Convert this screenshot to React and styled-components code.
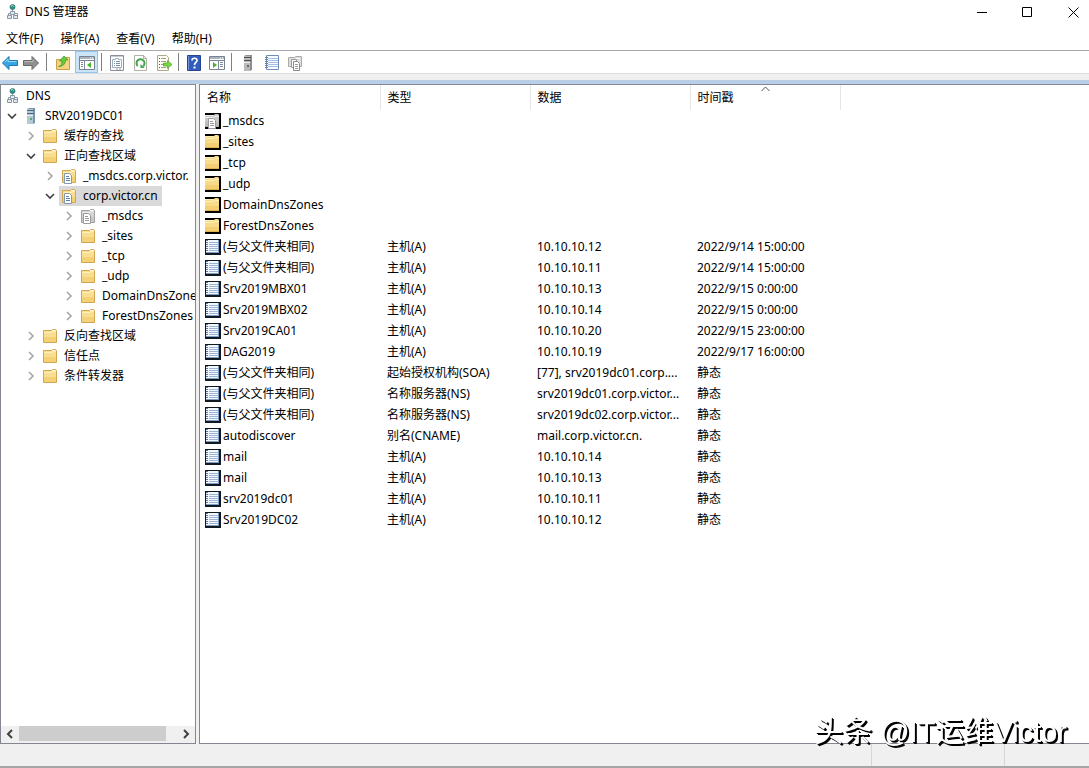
import React, { useState } from 'react';
import styled, { createGlobalStyle, css } from 'styled-components';

const GlobalStyle = createGlobalStyle`
  * {
    box-sizing: border-box;
  }

  body {
    margin: 0;
    background: #fff;
    color: #000;
    font-family: 'Noto Sans', 'Noto Sans CJK SC', sans-serif;
    font-size: 12px;
    line-height: 20px;
  }

  button {
    border: 0;
    padding: 0;
    background: none;
    color: inherit;
    font: inherit;
  }

  svg {
    display: block;
    flex: none;
  }
`;

const Window = styled.div`
  display: flex;
  flex-direction: column;
  min-height: 100vh;
  background: #f0f0f0;
`;

const TitleBar = styled.header`
  display: flex;
  align-items: center;
  height: 24px;
  padding-left: 5px;
  background: #fff;
`;

const Title = styled.h1`
  flex: 1;
  margin: 0 0 0 4px;
  font-size: 12px;
  font-weight: 400;
`;

const WindowButton = styled.button`
  display: flex;
  align-items: center;
  justify-content: center;
  width: 45px;
  height: 24px;

  &:last-child {
    width: 46px;
    margin-right: -7px;
  }
`;

const MenuBar = styled.nav`
  display: flex;
  gap: 17px;
  height: 27px;
  padding: 5px 6px 0;
  background: #fff;
  border-bottom: 1px solid #a9a9a9;
`;

const MenuItem = styled.button`
  height: 20px;
`;

const Toolbar = styled.div`
  display: flex;
  align-items: center;
  height: 23px;
  background: #fff;
  border-bottom: 1px solid #dcdcdc;
`;

const ToolButton = styled.button`
  display: flex;
  align-items: center;
  justify-content: center;
  width: ${props => props.$width || 23}px;
  height: 22px;
  padding-top: 2px;
  ${props => props.$active && css`
    background: #cce4f7;
    box-shadow: inset 0 0 0 1px #92c4ee;
  `}
`;

const Separator = styled.span`
  width: 1px;
  height: 18px;
  margin: 0 3px;
  background: #808080;
`;

const Body = styled.main`
  display: flex;
  flex: 1;
  gap: 3px;
  margin-top: 6px;
  border-top: 4px solid #b9cfe7;
`;

const TreePane = styled.section`
  display: flex;
  flex-direction: column;
  width: 196px;
  background: #fff;
  border: 1px solid #828790;
`;

const Tree = styled.ul`
  flex: 1;
  margin: 0;
  padding: 1px 0 0;
  overflow: hidden;
  list-style: none;
`;

const TreeRow = styled.li`
  display: flex;
  height: 20px;
  padding-left: ${props => (props.$depth ? 1 + (props.$depth - 1) * 19 : 2)}px;
  white-space: nowrap;
`;

const Expander = styled.button`
  display: flex;
  flex: none;
  align-items: center;
  justify-content: center;
  width: 19px;
`;

const TreeLabel = styled.button`
  display: flex;
  flex: none;
  align-items: center;
  gap: ${props => (props.$root ? 5 : 6)}px;
  padding: 0 4px 0 2px;
  background: ${props => (props.$selected ? '#d9d9d9' : 'transparent')};
`;

const ScrollBar = styled.div`
  display: flex;
  height: 17px;
  padding-bottom: 2px;
  background: #f0f0f0;
`;

const ScrollButton = styled.button`
  display: flex;
  align-items: center;
  justify-content: center;
  width: 18px;
`;

const ScrollTrack = styled.div`
  flex: 1;
`;

const ScrollThumb = styled.div`
  width: 93%;
  height: 100%;
  background: #cdcdcd;
`;

const ListPane = styled.section`
  flex: 1;
  min-width: 0;
  background: #fff;
  border: 1px solid #828790;
  border-right: 0;
`;

const RecordTable = styled.table`
  width: 640px;
  table-layout: fixed;
  border-collapse: collapse;
`;

const HeadCell = styled.th`
  position: relative;
  width: ${props => props.$width}px;
  height: 25px;
  padding: 0 6px 0 7px;
  border-right: 1px solid #e5e5e5;
  font-weight: 400;
  text-align: left;
`;

const SortMark = styled.svg`
  position: absolute;
  top: 1px;
  left: calc(50% - 4px);
`;

const Cell = styled.td`
  height: 21px;
  padding: 0 4px 0 7px;
  overflow: hidden;
  text-overflow: ellipsis;
  white-space: nowrap;
`;

const NameCell = styled(Cell)`
  padding-left: 5px;
`;

const RecordName = styled.div`
  display: flex;
  align-items: center;
  gap: 2px;
`;

const StatusBar = styled.footer`
  display: flex;
  justify-content: flex-end;
  height: 24px;
  background: #f0f0f0;
  border-bottom: 2px solid #a6a6a6;
`;

const StatusCell = styled.span`
  width: ${props => props.$width}px;
  border-left: 1px solid #d7d7d7;
`;

const Watermark = styled.div`
  position: fixed;
  right: 22px;
  bottom: 16px;
  color: #fff;
  font-family: 'Liberation Sans', 'Noto Sans CJK SC', sans-serif;
  font-size: 29px;
  line-height: 40px;
  text-shadow: 2px 2px 0 #000, 1px 1px 0 #000;
  white-space: nowrap;
`;

const DnsIcon = () => (
  <svg width="16" height="16" viewBox="0 0 16 16">
    <path d="M7.500 5v4M3.500 12V9.500h9V12" fill="none" stroke="#8b98a3" />
    <circle cx="7.500" cy="3" r="2.600" fill="#2f9186" stroke="#3c6f70" strokeWidth=".6" />
    <path d="M6 2.300l1.500-.8 1 1" stroke="#b9eee0" fill="none" />
    <path d="M5.500 7.500h4v3h-4zM2.500 11.500h4v3h-4zM8.500 11.500h4v3h-4z" fill="#e3ebf1" stroke="#8997a5" />
  </svg>
);

const ServerIcon = ({ gray }) => (
  <svg width="16" height="16" viewBox="0 0 16 16">
    <path d="M4 1l2-1h6v15l-2 1H4z" fill={gray ? '#8f8f8f' : '#7896ac'} />
    <path d="M4 1h6v15H4z" fill={gray ? '#b9b9b9' : '#b5c8d5'} />
    <path d="M4 2.500h7M4 5.500h7" stroke={gray ? '#515151' : '#4c687b'} />
    <path d="M4 7.500h6" stroke="#e9f0f4" />
    <path d="M7 10h2v2H7z" fill={gray ? '#686868' : '#5aac64'} />
  </svg>
);

const FolderShape = ({ gray }) => (
  <>
    <path d="M1.500 2.500h8l1-1h3l1 1v12h-13z" fill={gray ? '#d4d4d4' : '#f9de92'} stroke={gray ? '#a1a1a1' : '#d0a652'} />
    <path d="M2 4.500h8l1.500-1H14" fill="none" stroke={gray ? '#eee' : '#fff0b8'} />
    <path d="M10 2.500h3" stroke={gray ? '#fff' : '#fffbea'} />
    <path d="M2 9h12v5H2z" fill={gray ? '#c9c9c9' : '#f4d076'} />
  </>
);

const PageShape = ({ gray }) => (
  <>
    <path d="M3.500 5.500h5l2 2v8h-7z" fill="#fff" stroke={gray ? '#9a9a9a' : '#8799aa'} />
    <path d="M5 8.500h3M5 10.500h4M5 12.500h4" stroke={gray ? '#999' : '#5385b3'} />
  </>
);

const FolderIcon = ({ gray, page }) => (
  <svg width="16" height="16" viewBox="0 0 16 16">
    <FolderShape gray={gray} />
    {page && <PageShape gray={gray} />}
  </svg>
);

// list icons carry an opaque black mask behind them
const MaskedFolderIcon = ({ gray }) => (
  <svg width="16" height="16" viewBox="0 0 16 16">
    <path d="M0 0h16v16H0z" />
    <path d="M0 2h9l1-1h3l1 1v12H0z" fill={gray ? '#c9c9c9' : '#f8db8a'} />
    <path d="M0 9h14v4H0z" fill={gray ? '#bcbcbc' : '#f3ce72'} />
    <path d="M0 2.500h9M0 4.500h9l1-1h4" fill="none" stroke={gray ? '#eee' : '#fff0b7'} />
    <path d="M0 13h14v1H0z" fill={gray ? '#aaa' : '#dfb250'} />
    {gray && <PageShape gray />}
  </svg>
);

const RecordIcon = () => (
  <svg width="16" height="16" viewBox="0 0 16 16">
    <path d="M0 0h16v16H0z" fill="#101820" />
    <path d="M1 1h13v13H1z" fill="#f3f8ff" />
    <path d="M4 3.500h10M4 5.500h10M4 7.500h10M4 9.500h10M4 11.500h10" stroke="#9bb4d8" />
    <path d="M2 1v13" stroke="#5e7890" strokeDasharray="1 1" strokeWidth="2" />
    <path d="M13.500 1v13M1 13.500h13" stroke="#7f9dc4" />
  </svg>
);

const ArrowIcon = ({ right }) => (
  <svg width="18" height="16" viewBox="0 0 18 16">
    <path
      d={right ? 'M16.500 8L10 1.500v4H1.500v5H10v4z' : 'M1.500 8L8 1.500v4h8.500v5H8v4z'}
      fill={right ? '#919191' : '#37a6e5'}
      stroke={right ? '#666' : '#2375ad'}
    />
    <path d={right ? 'M2.500 6.500H11v-2' : 'M4 7l3-3v2.500h8.500'} fill="none" stroke={right ? '#bbb' : '#90dcff'} />
  </svg>
);

const UpIcon = () => (
  <svg width="16" height="16" viewBox="0 0 16 16">
    <path d="M1.500 4.500h7l2-2h4v12h-13z" fill="#f5d381" stroke="#cf9e4d" />
    <path d="M3.500 11.500c2.500-.5 3.500-2 3.500-5.500H4.500L9 1l4 4h-2.500c0 4-2.500 6.500-7 6.500z" fill="#66ca3d" stroke="#389627" strokeWidth=".7" />
  </svg>
);

const ConsoleIcon = ({ play }) => (
  <svg width="16" height="16" viewBox="0 0 16 16">
    <path d="M.5 1.500h15v13H.5z" fill="#fff" stroke="#788391" />
    <path d="M1 3h14" stroke="#a9b3c1" strokeWidth="2" />
    <path d="M1 5.500h14" stroke="#788391" />
    <path d="M11 3h1M13 3h1" stroke="#fff" />
    {play ? (
      <>
        <path d="M9.500 6v8M11 7.500h3M11 9.500h3M11 11.500h3" stroke="#7f8d9e" />
        <path d="M4 7v6l4-3z" fill="#42b52d" />
      </>
    ) : (
      <>
        <path d="M5.500 6v8M2 7.500h2M2 9.500h2M2 11.500h2" stroke="#7f8d9e" />
        <path d="M12 7v6l-4-3z" fill="#42b52d" />
      </>
    )}
  </svg>
);

const PropertiesIcon = () => (
  <svg width="16" height="16" viewBox="0 0 16 16">
    <path d="M1.500.5h13v15h-13z" fill="#fff" stroke="#888f98" />
    <path d="M2 1.500h12" stroke="#c3cbd3" />
    <path d="M3.500 4.500h3v-1h3v1h3v8h-9z" fill="#fff" stroke="#a1adba" />
    <path d="M5 6.500h1M7 6.500h4M5 8.500h1M7 8.500h4M5 10.500h1M7 10.500h4" stroke="#7892aa" />
    <path d="M7 14h2M10 14h2" stroke="#8996a4" />
  </svg>
);

const RefreshIcon = () => (
  <svg width="16" height="16" viewBox="0 0 16 16">
    <path d="M2.500.5h9l3 3v12h-12z" fill="#fff" stroke="#b0b0a5" />
    <path d="M11.500.5v3h3" fill="none" stroke="#b0b0a5" />
    <path d="M5.700 11A4 4 0 1 1 11 11.300" fill="none" stroke="#43a548" strokeWidth="2" />
    <path d="M8.500 9v4h4z" fill="#43a548" />
  </svg>
);

const ExportIcon = () => (
  <svg width="18" height="16" viewBox="0 0 18 16">
    <path d="M2.500.5h9l2 2v13h-11z" fill="#fffdf0" stroke="#b1aa89" />
    <path d="M4 3.500h1M4 6.500h1M4 9.500h1M4 12.500h1" stroke="#555" />
    <path d="M6 3.500h5M6 6.500h5M6 9.500h5M6 12.500h5" stroke="#9d9e96" />
    <path d="M8.500 8h4V5.500L17 9.500l-4.500 4V11h-4z" fill="#77d843" stroke="#4aa526" strokeWidth=".7" />
  </svg>
);

const HelpIcon = () => (
  <svg width="16" height="16" viewBox="0 0 16 16">
    <path d="M1.500.5h13v15h-13z" fill="#315dbe" stroke="#2a438f" />
    <path d="M2.500 1v14" stroke="#7795dc" />
    <path d="M6 5.500c0-3 5-3 5 0 0 2-2.500 2-2.500 4.500" fill="none" stroke="#fff" strokeWidth="1.700" />
    <path d="M7.500 11.500h2v2h-2z" fill="#fff" />
  </svg>
);

const NotebookIcon = () => (
  <svg width="16" height="16" viewBox="0 0 16 16">
    <path d="M2.500.5h12v14h-12z" fill="#f8fbff" stroke="#6f8fb8" />
    <path d="M4 3.500h10M4 5.500h10M4 7.500h10M4 9.500h10M4 11.500h10" stroke="#a3bfe2" />
    <path d="M1 2.500h3M1 4.500h3M1 6.500h3M1 8.500h3M1 10.500h3M1 12.500h3" stroke="#6d7d8e" />
  </svg>
);

const PagesIcon = () => (
  <svg width="16" height="16" viewBox="0 0 16 16">
    <path d="M1.500 2.500h6l1-1h6v10h-13z" fill="#dedede" stroke="#aaa" />
    <path d="M9 3.500h4" stroke="#fff" />
    <path d="M4.500 4.500h5v8h-5z" fill="#fff" stroke="#999" />
    <path d="M6.500 6.500h4l2 2v7h-6z" fill="#fff" stroke="#888" />
    <path d="M8 9.500h3M8 11.500h3M8 13.500h3" stroke="#999" />
  </svg>
);

const Chevron = ({ open, left, dark }) => {
  let d = 'M3 1l4 4-4 4';
  if (open) d = 'M1 3l4 4 4-4';
  if (left) d = 'M7 1L3 5l4 4';
  return (
    <svg width="10" height="10" viewBox="0 0 10 10">
      <path d={d} fill="none" stroke={open || dark ? '#404040' : '#a6a6a6'} strokeWidth={dark ? 2 : 1.6} />
    </svg>
  );
};

const MENUS = ['文件(F)', '操作(A)', '查看(V)', '帮助(H)'];

const NODES = [
  { depth: 0, text: 'DNS', icon: <DnsIcon /> },
  { depth: 1, text: 'SRV2019DC01', icon: <ServerIcon />, open: true },
  { depth: 2, text: '缓存的查找', icon: <FolderIcon /> },
  { depth: 2, text: '正向查找区域', icon: <FolderIcon />, open: true },
  { depth: 3, text: '_msdcs.corp.victor.', icon: <FolderIcon page /> },
  { depth: 3, text: 'corp.victor.cn', icon: <FolderIcon page />, open: true },
  { depth: 4, text: '_msdcs', icon: <FolderIcon gray page /> },
  { depth: 4, text: '_sites', icon: <FolderIcon /> },
  { depth: 4, text: '_tcp', icon: <FolderIcon /> },
  { depth: 4, text: '_udp', icon: <FolderIcon /> },
  { depth: 4, text: 'DomainDnsZones', icon: <FolderIcon /> },
  { depth: 4, text: 'ForestDnsZones', icon: <FolderIcon /> },
  { depth: 2, text: '反向查找区域', icon: <FolderIcon /> },
  { depth: 2, text: '信任点', icon: <FolderIcon /> },
  { depth: 2, text: '条件转发器', icon: <FolderIcon /> },
];

const RECORDS = [
  ['_msdcs'],
  ['_sites'],
  ['_tcp'],
  ['_udp'],
  ['DomainDnsZones'],
  ['ForestDnsZones'],
  ['(与父文件夹相同)', '主机(A)', '10.10.10.12', '2022/9/14 15:00:00'],
  ['(与父文件夹相同)', '主机(A)', '10.10.10.11', '2022/9/14 15:00:00'],
  ['Srv2019MBX01', '主机(A)', '10.10.10.13', '2022/9/15 0:00:00'],
  ['Srv2019MBX02', '主机(A)', '10.10.10.14', '2022/9/15 0:00:00'],
  ['Srv2019CA01', '主机(A)', '10.10.10.20', '2022/9/15 23:00:00'],
  ['DAG2019', '主机(A)', '10.10.10.19', '2022/9/17 16:00:00'],
  ['(与父文件夹相同)', '起始授权机构(SOA)', '[77], srv2019dc01.corp....', '静态'],
  ['(与父文件夹相同)', '名称服务器(NS)', 'srv2019dc01.corp.victor...', '静态'],
  ['(与父文件夹相同)', '名称服务器(NS)', 'srv2019dc02.corp.victor...', '静态'],
  ['autodiscover', '别名(CNAME)', 'mail.corp.victor.cn.', '静态'],
  ['mail', '主机(A)', '10.10.10.14', '静态'],
  ['mail', '主机(A)', '10.10.10.13', '静态'],
  ['srv2019dc01', '主机(A)', '10.10.10.11', '静态'],
  ['Srv2019DC02', '主机(A)', '10.10.10.12', '静态'],
];

const recordIcon = ([name, type]) => {
  if (type) return <RecordIcon />;
  return <MaskedFolderIcon gray={name === '_msdcs'} />;
};

const App = () => {
  const [selected, setSelected] = useState('corp.victor.cn');

  return (
    <>
      <GlobalStyle />
      <Window>
        <TitleBar>
          <DnsIcon />
          <Title>DNS 管理器</Title>
          <WindowButton aria-label="最小化">
            <svg width="11" height="11"><path d="M0 5.500h10" stroke="#000" /></svg>
          </WindowButton>
          <WindowButton aria-label="最大化">
            <svg width="11" height="11"><path d="M.5.5h9v9h-9z" fill="none" stroke="#000" /></svg>
          </WindowButton>
          <WindowButton aria-label="关闭">
            <svg width="11" height="11"><path d="M.5.5l10 10M10.500.5l-10 10" stroke="#000" /></svg>
          </WindowButton>
        </TitleBar>

        <MenuBar>
          {MENUS.map(menu => <MenuItem key={menu}>{menu}</MenuItem>)}
        </MenuBar>

        <Toolbar>
          <ToolButton $width={19} aria-label="后退"><ArrowIcon /></ToolButton>
          <ToolButton $width={24} aria-label="前进"><ArrowIcon right /></ToolButton>
          <Separator />
          <ToolButton $width={25} aria-label="上一级"><UpIcon /></ToolButton>
          <ToolButton $active aria-label="显示控制台树"><ConsoleIcon /></ToolButton>
          <Separator />
          <ToolButton aria-label="属性"><PropertiesIcon /></ToolButton>
          <ToolButton $width={24} aria-label="刷新"><RefreshIcon /></ToolButton>
          <ToolButton aria-label="导出列表"><ExportIcon /></ToolButton>
          <Separator />
          <ToolButton aria-label="帮助"><HelpIcon /></ToolButton>
          <ToolButton aria-label="显示操作窗格"><ConsoleIcon play /></ToolButton>
          <Separator />
          <ToolButton $width={25} aria-label="新建服务器"><ServerIcon gray /></ToolButton>
          <ToolButton aria-label="新建记录"><NotebookIcon /></ToolButton>
          <ToolButton aria-label="新建区域"><PagesIcon /></ToolButton>
        </Toolbar>

        <Body>
          <TreePane>
            <Tree>
              {NODES.map(node => (
                <TreeRow key={node.text} $depth={node.depth}>
                  {node.depth > 0 && (
                    <Expander aria-label={node.open ? '折叠' : '展开'}>
                      <Chevron open={node.open} />
                    </Expander>
                  )}
                  <TreeLabel
                    $root={node.depth === 0}
                    $selected={selected === node.text}
                    onClick={() => setSelected(node.text)}
                  >
                    {node.icon}
                    {node.text}
                  </TreeLabel>
                </TreeRow>
              ))}
            </Tree>
            <ScrollBar>
              <ScrollButton aria-label="向左滚动"><Chevron left dark /></ScrollButton>
              <ScrollTrack><ScrollThumb /></ScrollTrack>
              <ScrollButton aria-label="向右滚动"><Chevron dark /></ScrollButton>
            </ScrollBar>
          </TreePane>

          <ListPane>
            <RecordTable>
              <thead>
                <tr>
                  <HeadCell $width={180}>名称</HeadCell>
                  <HeadCell $width={150}>类型</HeadCell>
                  <HeadCell $width={160}>数据</HeadCell>
                  <HeadCell $width={150}>
                    时间戳
                    <SortMark width="9" height="6">
                      <path d="M.5 5l4-4 4 4" fill="none" stroke="#555" />
                    </SortMark>
                  </HeadCell>
                </tr>
              </thead>
              <tbody>
                {RECORDS.map((record, i) => (
                  <tr key={i}>
                    <NameCell>
                      <RecordName>
                        {recordIcon(record)}
                        {record[0]}
                      </RecordName>
                    </NameCell>
                    <Cell>{record[1]}</Cell>
                    <Cell>{record[2]}</Cell>
                    <Cell>{record[3]}</Cell>
                  </tr>
                ))}
              </tbody>
            </RecordTable>
          </ListPane>
        </Body>

        <StatusBar>
          <StatusCell $width={133} />
          <StatusCell $width={85} />
        </StatusBar>
      </Window>
      <Watermark>头条 @IT运维Victor</Watermark>
    </>
  );
};

export default App;
